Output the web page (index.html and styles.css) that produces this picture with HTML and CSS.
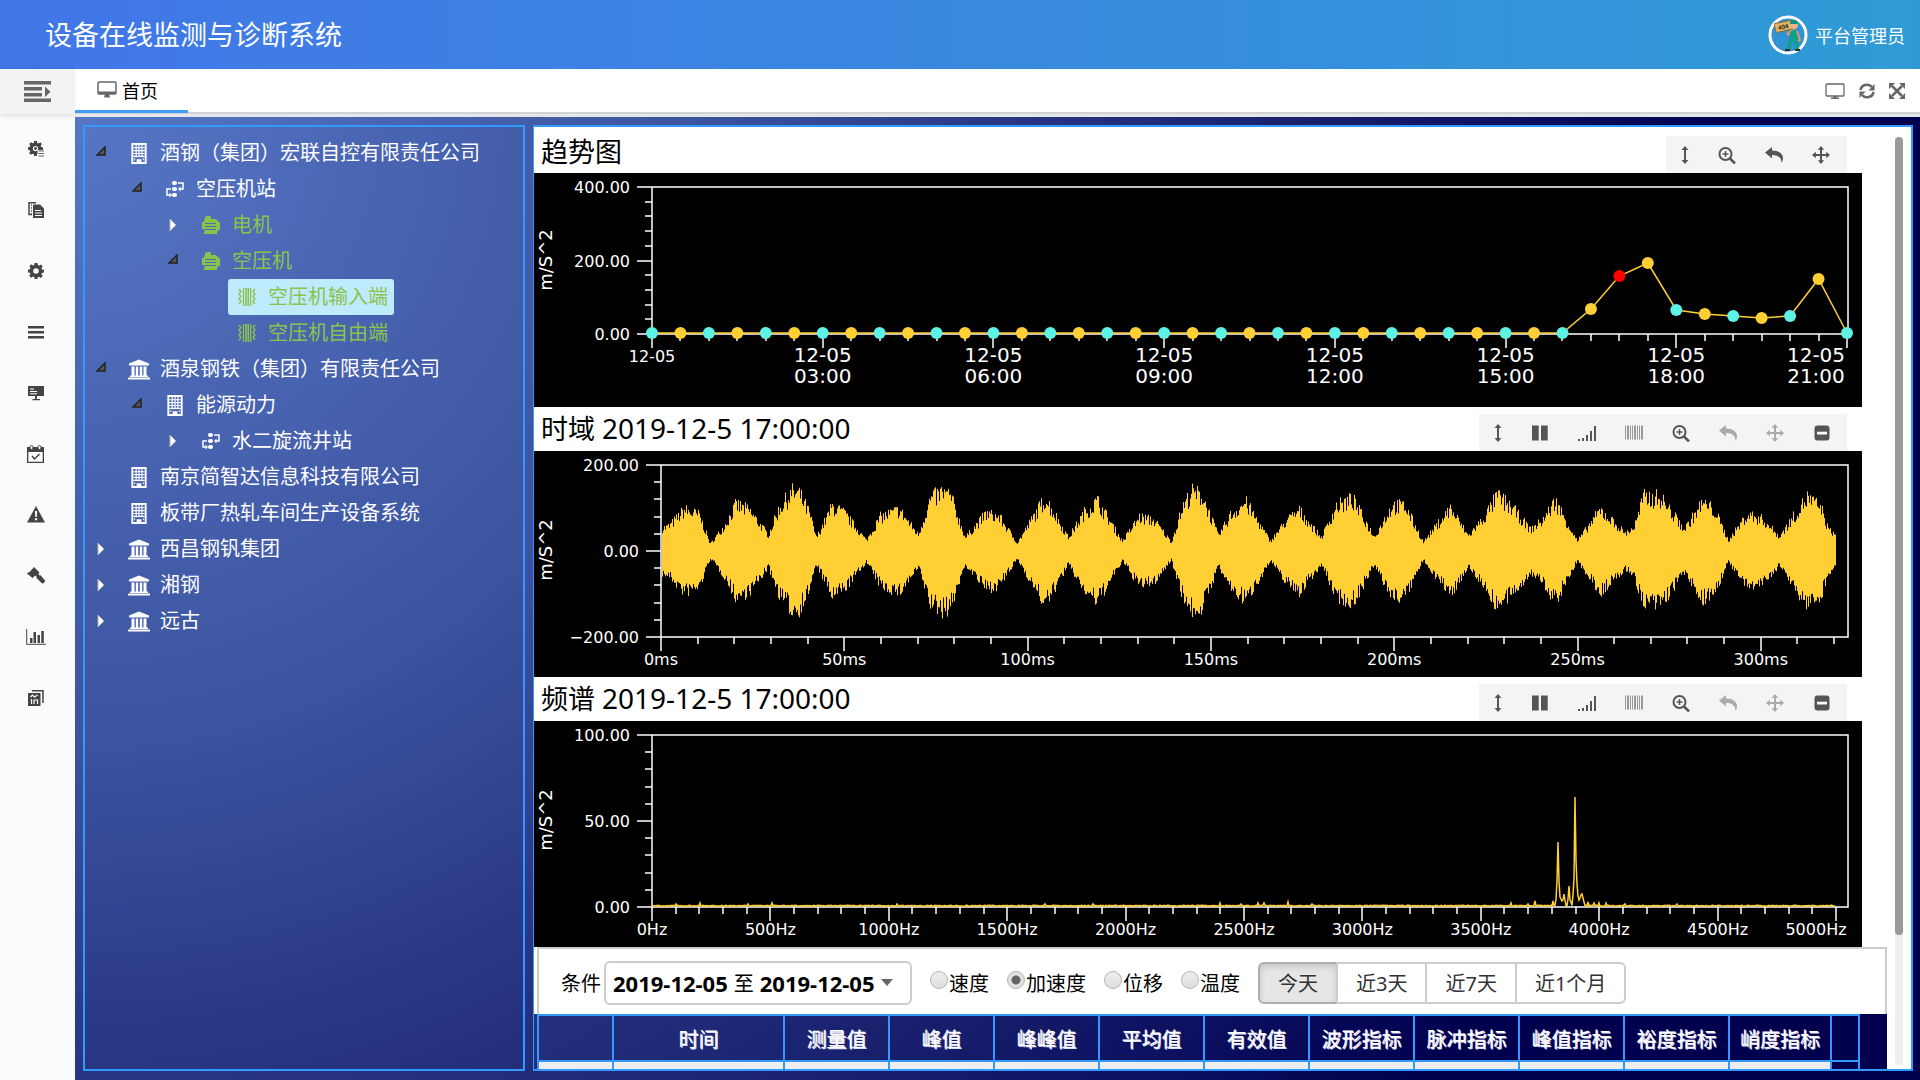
FILE: index.html
```html
<!DOCTYPE html>
<html lang="zh-CN">
<head>
<meta charset="utf-8">
<title>设备在线监测与诊断系统</title>
<link rel="stylesheet" href="styles.css">
</head>
<body>
<svg class="sprite" aria-hidden="true">
  <symbol id="i-building" viewBox="0 0 18 22"><path fill="#fff" fill-rule="evenodd" d="M1 0h16v22H1zM3 2v18h3.500v-3h5v3H15V2z"/><path stroke="#fff" stroke-width="1.200" fill="none" d="M3 5h12M3 8h12M3 11h12M3 14h12M6 2v13M9 2v13M12 2v13"/><path fill="#fff" d="M4 16h1v2H4zM13 16h1v2h-1z"/></symbol>
  <symbol id="i-bank" viewBox="0 0 22 20"><path fill="#fff" d="M11 0l10 4v2H1V4zM0 18h22v2H0zM2 16h18v1.500H2zM3.500 7h3v9h-3zM7.800 7h2.400v9H7.800zM11.800 7h2.400v9h-2.400zM15.500 7h3v9h-3z"/></symbol>
  <symbol id="i-flow" viewBox="0 0 18 18"><path fill="none" stroke="#fff" stroke-width="1.500" d="M5 9H1v6h4M12 3h5v6h-4"/><g fill="#fff"><rect x="6" y="1" width="5" height="4" rx="2"/><rect x="6" y="7" width="5" height="4" rx="2"/><rect x="6" y="13" width="5" height="4" rx="2"/><path d="M3.500 12.500l2.500 2.500-2.500 2.500zM14.500 6.500L12 9l2.500 2.500z"/></g></symbol>
  <symbol id="i-motor" viewBox="0 0 18 18"><path fill="#8bc34a" d="M3 1l2-1h3l1 1v2h5l2 2v1h2v8h-2v1l-1 1v2H2v-2l1-1-1-2H0V6h2V4l1-1z"/><path stroke="#4f6cba" fill="none" d="M3 7.500h11M3 10.500h11M3 13.500h11"/></symbol>
  <symbol id="i-vibe" viewBox="0 0 18 18"><g fill="none" stroke="#8bc34a" stroke-width="1.300"><path d="M1 1l2 2.500L1 6l2 2.500L1 11l2 2.500L1 16M17 1l-2 2.500L17 6l-2 2.500 2 2.500-2 2.500 2 2.500"/><path d="M5.500 0v18M12.700 0v18"/><path stroke-width="1.600" d="M8 0v18M10.300 0v18"/></g></symbol>
  <symbol id="i-open" viewBox="0 0 10 10"><path d="M9 1v8H1z" fill="#555" stroke="#222" stroke-width="1.500"/></symbol>
  <symbol id="i-closed" viewBox="0 0 8 14"><path d="M1 1l6 6-6 6z" fill="#fff" stroke="#b0b0b0"/></symbol>
  <symbol id="i-fold" viewBox="0 0 27 21"><path fill="#666" d="M0 0h27v3.500H0zM0 6h18v3.500H0zM0 12h18v3.500H0zM0 17.500h27V21H0zM21 5.500l5.500 5.200L21 16z"/></symbol>
  <symbol id="i-screen" viewBox="0 0 20 17"><rect x="1" y="1" width="18" height="12" rx="1" fill="#fff" stroke="#666" stroke-width="1.500"/><path fill="#666" d="M1 10.500h18V13H1zM8 13h4l1 3.500H7z"/></symbol>
  <symbol id="i-screen-thin" viewBox="0 0 20 16"><rect x="1" y="1" width="18" height="12" rx="1" fill="none" stroke="#666" stroke-width="1.300"/><path fill="#666" d="M8.500 13h3v1.500h2.500V16H6v-1.500h2.500z"/></symbol>
  <symbol id="i-refresh" viewBox="0 0 16 16"><path fill="none" stroke="#666" stroke-width="2.600" d="M1.500 7A6.500 6 0 0 1 13 4M14.500 9A6.500 6 0 0 1 3 12"/><path fill="#666" d="M15.500 1v6.500H9.500zM.5 15V8.500h6z"/></symbol>
  <symbol id="i-expand" viewBox="0 0 16 16"><path stroke="#666" stroke-width="2.500" d="M3 3l10 10M13 3L3 13"/><path fill="#666" d="M0 0h6L0 6zM16 0v6l-6-6zM0 16v-6l6 6zM16 16h-6l6-6z"/></symbol>
  <symbol id="i-gear" viewBox="0 0 16 16"><path fill="#444" fill-rule="evenodd" d="M6.500 0h3l.4 2.100 1.300.6L13 1.400 14.800 3.300 13.500 5.100l.5 1.300 2 .3v2.800l-2 .4-.6 1.200 1.300 1.800-2 2-1.700-1.200-1.300.5L9.300 16H6.600l-.4-2-1.200-.5-1.800 1.200-2-2 1.200-1.700L2 9.800 0 9.400V6.600l2-.4.500-1.200-1.200-1.800 2-1.900L5 2.500l1.200-.5zM8 5.200a2.800 2.800 0 1 0 0 5.600 2.800 2.800 0 0 0 0-5.600z"/></symbol>
  <symbol id="i-gear-list" viewBox="0 0 16 16"><use href="#i-gear" width="15" height="15"/><circle cx="7.500" cy="7.500" r="1.400" fill="#444"/><path fill="#f9fbfd" d="M9.500 9H16v7H9.500z"/><path stroke="#666" d="M10.500 10H16M10.500 12.500H16M10.500 15H16"/></symbol>
  <symbol id="i-docs" viewBox="0 0 16 16"><path fill="none" stroke="#444" stroke-width="1.500" d="M4 12.500H1V.8h7"/><path stroke="#777" d="M3.500 2v10" stroke-dasharray="2 1"/><path fill="#444" d="M5 2.500h7l4 4V16H5z"/><path stroke="#f9fbfd" d="M7 8.500h6M7 11h7M7 13.500h7"/></symbol>
  <symbol id="i-menu" viewBox="0 0 16 16"><path fill="#444" d="M0 2h16v2.600H0zM0 7h16v2.600H0zM0 12h16v2.600H0z"/></symbol>
  <symbol id="i-board" viewBox="0 0 16 16"><path fill="#444" d="M0 1h16v10H9v3h3v1.200H4.500V14H7v-3H0z"/><path stroke="#fff" d="M2 4h4M2 6.500h7M2 8.800h7"/></symbol>
  <symbol id="i-calendar" viewBox="0 0 17 18"><path fill="#444" fill-rule="evenodd" d="M0 2h17v16H0zM1.300 7v9.700h14.400V7z"/><g fill="#f9fbfd" stroke="#444"><rect x="3" y=".5" width="3" height="4" rx="1.500"/><rect x="11" y=".5" width="3" height="4" rx="1.500"/></g><path fill="none" stroke="#444" stroke-width="1.500" d="M5 11l2.500 3 5-5"/></symbol>
  <symbol id="i-warn" viewBox="0 0 18 17"><path fill="#444" d="M9 0l9 16.500H0z"/><path fill="#fff" d="M8 5h2.200l-.4 6H8.300zM8 12.300h2.200v2H8z"/></symbol>
  <symbol id="i-gavel" viewBox="0 0 18 18"><path fill="#444" d="M7 0l5.500 5.500-1 1.200.9 1.700 1.200-.2L18 13.500c.4 1.500-2 3.500-3.200 2.700L9.500 11l.1-1.300-1.300-1.200L5.500 11 0 6.500l1-1.300 1 .3L6 1.200z"/></symbol>
  <symbol id="i-chart" viewBox="0 0 20 16"><path fill="none" stroke="#444" d="M.7 0v15.300H20"/><path fill="#444" d="M4 9h2.500v5H4zM7.500 3h2.500v11H7.500zM11.500 6h2.500v8h-2.500zM15.300 2h2.500v12h-2.500z"/></symbol>
  <symbol id="i-report" viewBox="0 0 16 16"><path fill="none" stroke="#444" stroke-width="1.500" d="M4 .8h11V13"/><path fill="#444" d="M0 3h12.500v13H0z"/><path fill="none" stroke="#fff" stroke-width="1.200" d="M2.500 7l2-2 2 2 3-2M3.500 9v5M6 14v-4h3.500v4"/></symbol>
  <symbol id="i-vert" viewBox="0 0 18 18"><path fill="currentColor" d="M9 0l3.500 4H10v10h2.500L9 18l-3.500-4H8V4H5.500z"/></symbol>
  <symbol id="i-pause" viewBox="0 0 18 18"><path fill="currentColor" d="M1 1.500h6.700v15H1zM10 1.500h6.700v15H10z"/></symbol>
  <symbol id="i-signal" viewBox="0 0 18 18"><path fill="currentColor" d="M0 15h2v2H0zM4 14h2v3H4zM8 11h2v6H8zM12 7h2v10h-2zM16 2h2.500v15H16z"/></symbol>
  <symbol id="i-barcode" viewBox="0 0 18 18"><path fill="#999" d="M0 1.500h1v14H0zM2 1.500h2v14H2zM5 1.500h1v14H5zM7 1.500h1v14H7zM9 1.500h2v14H9zM12 1.500h1v14h-1zM14 1.500h1v14h-1zM16 1.500h2v14h-2z"/></symbol>
  <symbol id="i-zoom" viewBox="0 0 18 18"><circle cx="7.500" cy="8" r="6" fill="none" stroke="currentColor" stroke-width="2"/><path stroke="currentColor" stroke-width="1.500" d="M4.500 8h6M7.500 5v6"/><path stroke="currentColor" stroke-width="2.500" d="M12 12.500l5 5"/></symbol>
  <symbol id="i-undo" viewBox="0 0 18 18"><path fill="currentColor" d="M0 6.500L7 1v3.500c7 0 11 3.500 11 8 0 1.500-.5 3-1.500 4.500C16.500 11.500 13 9 7 9v3.500z"/></symbol>
  <symbol id="i-move" viewBox="0 0 18 18"><path fill="currentColor" d="M9 0l3.200 3.800H10V8h4.200V5.800L18 9l-3.800 3.200V10H10v4.200h2.200L9 18l-3.200-3.800H8V10H3.800v2.200L0 9l3.800-3.200V8H8V3.800H5.800z"/></symbol>
  <symbol id="i-minus" viewBox="0 0 18 18"><rect x="1.500" y="1.500" width="15" height="15" rx="3" fill="currentColor"/><path fill="#fff" d="M4 7.700h10v2.800H4z"/></symbol>
</svg>

<header class="header">
  <h1 class="brand">设备在线监测与诊断系统</h1>
  <a class="user" href="#">
    <svg class="avatar" viewBox="0 0 40 40" aria-hidden="true">
      <circle cx="20" cy="20" r="18" fill="#2f93d6" stroke="#fff" stroke-width="3"/>
      <path d="M19 20l8-8" stroke="#d79a6a" stroke-width="3"/>
      <rect x="7" y="7" width="17" height="9" rx="1" fill="#dcb56a" stroke="#8a6730" transform="rotate(-12 15 12)"/>
      <text class="avatar-sign" x="10" y="14" transform="rotate(-12 15 12)">404</text>
      <circle cx="26" cy="10" r="4" fill="#e8b48a"/><path d="M22 9a4 4 0 0 1 8 0z" fill="#12917e"/>
      <path d="M22 17l3-2h4l2 5-1 4 1 10h-3l-3-8-3 8h-4l4-11z" fill="#12a08e"/>
      <path d="M29 16l3 9-2 1" stroke="#d79a6a" stroke-width="2" fill="none"/>
      <path d="M17 34h5v2h-5zM27 34h5v2h-5z" fill="#3a2a20"/>
    </svg>
    <span>平台管理员</span>
  </a>
</header>

<div class="body">
  <aside class="sidebar">
    <button class="fold" aria-label="展开菜单"><svg width="27" height="21"><use href="#i-fold"/></svg></button>
    <nav class="menu">
      <a href="#"><svg width="16" height="16"><use href="#i-gear-list"/></svg></a>
      <a href="#"><svg width="16" height="16"><use href="#i-docs"/></svg></a>
      <a href="#"><svg width="16" height="16"><use href="#i-gear"/></svg></a>
      <a href="#"><svg width="16" height="16"><use href="#i-menu"/></svg></a>
      <a href="#"><svg width="16" height="16"><use href="#i-board"/></svg></a>
      <a href="#"><svg width="17" height="18"><use href="#i-calendar"/></svg></a>
      <a href="#"><svg width="18" height="17"><use href="#i-warn"/></svg></a>
      <a href="#"><svg width="18" height="18"><use href="#i-gavel"/></svg></a>
      <a href="#"><svg width="20" height="16"><use href="#i-chart"/></svg></a>
      <a href="#"><svg width="16" height="16"><use href="#i-report"/></svg></a>
    </nav>
  </aside>

  <div class="workspace">
    <div class="tabs">
      <a class="tab" href="#"><svg width="20" height="17"><use href="#i-screen"/></svg><span>首页</span></a>
      <div class="tab-tools">
        <button aria-label="大屏"><svg width="20" height="16"><use href="#i-screen-thin"/></svg></button>
        <button aria-label="刷新"><svg width="16" height="16"><use href="#i-refresh"/></svg></button>
        <button aria-label="全屏"><svg width="16" height="16"><use href="#i-expand"/></svg></button>
      </div>
    </div>

    <main class="main">
      <ul class="tree">
        <li class="node"><svg class="arrow open"><use href="#i-open"/></svg><a href="#"><svg class="icon"><use href="#i-building"/></svg>酒钢（集团）宏联自控有限责任公司</a></li>
        <li class="node l2"><svg class="arrow open"><use href="#i-open"/></svg><a href="#"><svg class="icon small"><use href="#i-flow"/></svg>空压机站</a></li>
        <li class="node l3 green"><svg class="arrow"><use href="#i-closed"/></svg><a href="#"><svg class="icon small"><use href="#i-motor"/></svg>电机</a></li>
        <li class="node l3 green"><svg class="arrow open"><use href="#i-open"/></svg><a href="#"><svg class="icon small"><use href="#i-motor"/></svg>空压机</a></li>
        <li class="node l4 green"><span class="arrow"></span><a class="selected" href="#"><svg class="icon small"><use href="#i-vibe"/></svg>空压机输入端</a></li>
        <li class="node l4 green"><span class="arrow"></span><a href="#"><svg class="icon small"><use href="#i-vibe"/></svg>空压机自由端</a></li>
        <li class="node"><svg class="arrow open"><use href="#i-open"/></svg><a href="#"><svg class="icon"><use href="#i-bank"/></svg>酒泉钢铁（集团）有限责任公司</a></li>
        <li class="node l2"><svg class="arrow open"><use href="#i-open"/></svg><a href="#"><svg class="icon"><use href="#i-building"/></svg>能源动力</a></li>
        <li class="node l3"><svg class="arrow"><use href="#i-closed"/></svg><a href="#"><svg class="icon small"><use href="#i-flow"/></svg>水二旋流井站</a></li>
        <li class="node"><span class="arrow"></span><a href="#"><svg class="icon"><use href="#i-building"/></svg>南京简智达信息科技有限公司</a></li>
        <li class="node"><span class="arrow"></span><a href="#"><svg class="icon"><use href="#i-building"/></svg>板带厂热轧车间生产设备系统</a></li>
        <li class="node"><svg class="arrow"><use href="#i-closed"/></svg><a href="#"><svg class="icon"><use href="#i-bank"/></svg>西昌钢钒集团</a></li>
        <li class="node"><svg class="arrow"><use href="#i-closed"/></svg><a href="#"><svg class="icon"><use href="#i-bank"/></svg>湘钢</a></li>
        <li class="node"><svg class="arrow"><use href="#i-closed"/></svg><a href="#"><svg class="icon"><use href="#i-bank"/></svg>远古</a></li>
      </ul>

      <section class="panel">
        <div class="content">
          <div class="charts">
            <div class="chart-head first">
              <h2>趋势图</h2>
              <div class="toolbar short">
                <button aria-label="纵向缩放"><svg><use href="#i-vert"/></svg></button>
                <button aria-label="放大"><svg><use href="#i-zoom"/></svg></button>
                <button aria-label="还原"><svg><use href="#i-undo"/></svg></button>
                <button aria-label="移动"><svg><use href="#i-move"/></svg></button>
              </div>
            </div>
            <svg class="chart" id="trend" viewBox="0 0 1328 234"></svg>
            <div class="chart-head">
              <h2>时域 <time>2019-12-5 17:00:00</time></h2>
              <div class="toolbar">
                <button aria-label="纵向缩放"><svg><use href="#i-vert"/></svg></button>
                <button aria-label="暂停"><svg><use href="#i-pause"/></svg></button>
                <button aria-label="幅值"><svg><use href="#i-signal"/></svg></button>
                <button aria-label="谱线"><svg><use href="#i-barcode"/></svg></button>
                <button aria-label="放大"><svg><use href="#i-zoom"/></svg></button>
                <button aria-label="还原" disabled><svg><use href="#i-undo"/></svg></button>
                <button aria-label="移动" disabled><svg><use href="#i-move"/></svg></button>
                <button aria-label="收起"><svg><use href="#i-minus"/></svg></button>
              </div>
            </div>
            <svg class="chart" id="wave" viewBox="0 0 1328 226"></svg>
            <div class="chart-head">
              <h2>频谱 <time>2019-12-5 17:00:00</time></h2>
              <div class="toolbar">
                <button aria-label="纵向缩放"><svg><use href="#i-vert"/></svg></button>
                <button aria-label="暂停"><svg><use href="#i-pause"/></svg></button>
                <button aria-label="幅值"><svg><use href="#i-signal"/></svg></button>
                <button aria-label="谱线"><svg><use href="#i-barcode"/></svg></button>
                <button aria-label="放大"><svg><use href="#i-zoom"/></svg></button>
                <button aria-label="还原" disabled><svg><use href="#i-undo"/></svg></button>
                <button aria-label="移动" disabled><svg><use href="#i-move"/></svg></button>
                <button aria-label="收起"><svg><use href="#i-minus"/></svg></button>
              </div>
            </div>
            <svg class="chart" id="spectrum" viewBox="0 0 1328 226"></svg>
          </div>

          <div class="filter-wrap">
            <form class="filter">
              <span>条件</span>
              <button type="button" class="range"><b>2019-12-05</b><span>至</span><b>2019-12-05</b><i class="caret"></i></button>
              <div class="radios">
                <label><input type="radio" name="kind">速度</label>
                <label><input type="radio" name="kind" checked>加速度</label>
                <label><input type="radio" name="kind">位移</label>
                <label><input type="radio" name="kind">温度</label>
              </div>
              <div class="group">
                <button type="button" class="active">今天</button>
                <button type="button">近3天</button>
                <button type="button">近7天</button>
                <button type="button">近1个月</button>
              </div>
            </form>
          </div>

          <table class="data">
            <colgroup><col class="c-no"><col class="c-time"><col span="9" class="c-val"><col class="c-last"><col></colgroup>
            <thead><tr><th></th><th>时间</th><th>测量值</th><th>峰值</th><th>峰峰值</th><th>平均值</th><th>有效值</th><th>波形指标</th><th>脉冲指标</th><th>峰值指标</th><th>裕度指标</th><th>峭度指标</th><th></th></tr></thead>
            <tbody><tr><td></td><td></td><td></td><td></td><td></td><td></td><td></td><td></td><td></td><td></td><td></td><td></td><td></td></tr></tbody>
          </table>
        </div>
        <div class="scroll"><div class="track"><div class="thumb"></div></div></div>
      </section>
    </main>
  </div>
</div>
<script src="charts.js"></script>
</body>
</html>
```

FILE: styles.css
```css
* { box-sizing: border-box; }

body {
  margin: 0;
  height: 100vh;
  display: flex;
  flex-direction: column;
  overflow: hidden;
  font-family: "Noto Sans", "Noto Sans CJK SC", sans-serif;
  font-size: 20px;
  color: #000;
}

button {
  font: inherit;
  margin: 0;
  padding: 0;
  border: 0;
  background: none;
}

a { color: inherit; text-decoration: none; }
svg { flex: none; display: block; }
.sprite { position: absolute; width: 0; height: 0; }

.header {
  flex: none;
  height: 69px;
  padding: 0 15px 0 45px;
  display: flex;
  align-items: center;
  justify-content: space-between;
  background: linear-gradient(to right, #4276e8, #2f9bd6);
  color: #fff;
}
.brand { margin: 0; font-size: 27px; font-weight: 400; line-height: 40px; }
.user { display: flex; align-items: center; gap: 7px; font-size: 18px; }
.avatar { width: 40px; height: 40px; }
.avatar-sign { font-size: 6px; font-weight: 700; fill: #3a2a10; }

.body { flex: 1; min-height: 0; display: flex; }

.sidebar { flex: none; width: 75px; background: #f9fbfd; }
.fold {
  width: 100%;
  height: 45px;
  display: flex;
  align-items: center;
  justify-content: center;
  background: #f2f3f5;
  box-shadow: 0 1px 6px rgba(0, 0, 0, .16);
}
.menu { padding-top: 4px; }
.menu a { height: 61px; display: flex; align-items: center; justify-content: center; padding-right: 4px; }

.workspace { flex: 1; min-width: 0; display: flex; flex-direction: column; }
.tabs {
  flex: none;
  height: 48px;
  display: flex;
  justify-content: space-between;
  background: linear-gradient(#fff 43px, #d0d2d4 43px, #d0d2d4 45px, #e4e8ea 45px);
}
.tab {
  height: 44px;
  width: 113px;
  padding-left: 22px;
  display: flex;
  align-items: center;
  gap: 5px;
  border-bottom: 3px solid #409eff;
  font-size: 18px;
}
.tab-tools { height: 43px; display: flex; align-items: center; gap: 14px; padding-right: 15px; }

.main {
  flex: 1;
  min-height: 0;
  display: flex;
  gap: 8px;
  padding: 8px 7px 9px 8px;
  background: radial-gradient(circle at 0 0, #5677c5 0, #3c539f 30%, #25317e 48%, #00004f 80%);
}

.tree {
  flex: none;
  width: 442px;
  margin: 0;
  padding: 8px 0 0 11px;
  list-style: none;
  border: 2px solid #39f;
  color: #fff;
}
.node { display: flex; align-items: center; height: 36px; }
.node a { display: flex; align-items: center; height: 36px; gap: 10px; line-height: 36px; padding: 0 6px 0 8px; white-space: nowrap; border-radius: 3px; }
.l2 { padding-left: 36px; }
.l3 { padding-left: 72px; }
.l4 { padding-left: 108px; }
.green { color: #8bc34a; }
.arrow { flex: none; width: 10px; height: 14px; margin-right: 14px; }
.arrow.open { height: 10px; margin-bottom: 4px; }
.icon { width: 22px; height: 21px; }
.icon.small { height: 18px; }
.selected { background: #bfebff; }

.panel {
  flex: 1;
  min-width: 0;
  display: flex;
  border: 2px solid #39f;
  border-left-width: 1px;
}
.content { flex: 1; min-width: 0; overflow: hidden; }
.charts { background: #fff; padding-right: 25px; }
.chart { width: 100%; height: auto; background: #000; }
.chart-head { height: 44px; display: flex; justify-content: space-between; align-items: flex-end; padding: 0 15px 0 7px; }
.chart-head.first { height: 46px; }
.chart-head h2 { margin: 0; font-size: 27px; font-weight: 400; line-height: 44px; }
.chart-head.first h2 { line-height: 42px; }
.chart-head time { font-size: 28px; }
.toolbar { display: flex; align-items: center; gap: 29px; width: 368px; height: 37px; padding-left: 10px; background: #f4f4f4; color: #555; }
.toolbar.short { width: 181px; }
.toolbar button { color: #555; }
.toolbar button:first-child { margin-right: -5px; }
.toolbar button:disabled { color: #aaa; }
.toolbar svg { width: 18px; height: 18px; }

.axis { stroke: #fff; stroke-width: 1.5; fill: none; }
.tick { font-family: "DejaVu Sans", "Liberation Sans", sans-serif; font-size: 16px; fill: #fff; }
.tick.large { font-size: 20px; }
.tick.unit { font-size: 18px; }
.trace { stroke: #ffcf33; fill: none; stroke-width: 1; }
.trace.line { stroke-width: 1.5; }

.filter-wrap { padding-left: 3px; background: #fff; }
.filter {
  height: 67px;
  display: flex;
  align-items: center;
  padding: 2px 0 0 22px;
  border: 2px solid #ccc;
  border-bottom: 0;
}
.range {
  width: 308px;
  height: 44px;
  margin-left: 3px;
  padding: 0 8px 0 7px;
  display: flex;
  align-items: center;
  gap: 6px;
  border: 2px solid #ccc;
  border-radius: 6px;
  white-space: nowrap;
}
.range b { font-size: 22px; }
.caret { border: 6px solid transparent; border-top: 7px solid #666; border-bottom: 0; }
.radios { display: flex; gap: 18px; margin: 0 18px; }
.radios label { display: flex; align-items: center; gap: 1px; white-space: nowrap; }
.radios input {
  appearance: none;
  width: 18px;
  height: 18px;
  margin: 0 0 6px;
  border: 1px solid #b4b4b4;
  border-radius: 50%;
  background: linear-gradient(#eee, #ddd);
}
.radios input:checked { background: radial-gradient(circle, #666 4px, #e2e2e2 5px); }
.group { display: flex; }
.group button {
  height: 42px;
  padding: 0 18px;
  border: 2px solid #ccc;
  margin-left: -2px;
  color: #333;
  white-space: nowrap;
}
.group button:first-child { margin-left: 0; border-radius: 6px 0 0 6px; }
.group button:last-child { border-radius: 0 6px 6px 0; }
.group .active { background: #e6e6e6; border-color: #adadad; box-shadow: inset 0 3px 6px rgba(0, 0, 0, .14); }

.data {
  width: calc(100% - 30px);
  margin-left: 3px;
  border-collapse: collapse;
  table-layout: fixed;
  border: 2px solid #39f;
  color: #fff;
}
.c-no { width: 75px; }
.c-time { width: 171px; }
.c-val { width: 105px; }
.c-last { width: 102px; }
.data th { height: 46px; padding: 0; border: 2px solid #39f; font-weight: 400; text-shadow: 1px 1px #dde; white-space: nowrap; }
.data td { height: 36px; border: 2px solid #39f; background: #eee; }
.data td:last-child { background: none; }

.scroll { flex: none; width: 24px; padding: 10px 8px 4px; background: #fff; }
.track { height: 100%; border-radius: 4px; background: #eee; }
.thumb { height: 86%; border-radius: 4px; background: #999; }
```

FILE: charts.js
```js
const NS = "http://www.w3.org/2000/svg";

function add(svg, name, attrs, text) {
  const el = document.createElementNS(NS, name);
  for (const key in attrs) el.setAttribute(key, attrs[key]);
  if (text !== undefined) el.textContent = text;
  svg.appendChild(el);
}

// Repeatable noise, so that the traces look the same on every load
let seed = 7;
function noise() {
  seed = (seed * 16807) % 2147483647;
  return seed / 2147483647;
}

function frame(svg, left, bottom, yLabels) {
  const top = 14, right = 1314;
  let d = `M${left} ${top}H${right}V${bottom}H${left}Z`;
  for (let i = 0; i <= 10; i++) {
    const y = Math.round(top + (bottom - top) * i / 10);
    d += `M${left} ${y}h${i % 5 ? -7 : -15}`;
  }
  add(svg, "path", { class: "axis", d });
  yLabels.forEach((label, i) => {
    const y = top + (bottom - top) * i / 2 + 6;
    add(svg, "text", { class: "tick", x: left - 22, y, "text-anchor": "end" }, label);
  });
  const mid = Math.round((top + bottom) / 2) - 1;
  add(svg, "text", { class: "tick unit", x: 18, y: mid, "text-anchor": "middle", transform: `rotate(-90 18 ${mid})` }, "m/S^2");
}

function xTicks(svg, left, bottom, step, count, major) {
  let d = "";
  for (let i = 0; i <= count; i++) {
    d += `M${Math.round(left + step * i)} ${bottom}v${i % major ? 7 : 14}`;
  }
  add(svg, "path", { class: "axis", d });
}

function drawTrend() {
  const svg = document.getElementById("trend");
  const left = 118, bottom = 161, step = 1195 / 42;
  frame(svg, left, bottom, ["400.00", "200.00", "0.00"]);
  xTicks(svg, left, bottom, step, 42, 6);
  add(svg, "text", { class: "tick", x: left, y: 189, "text-anchor": "middle" }, "12-05");
  ["03:00", "06:00", "09:00", "12:00", "15:00", "18:00", "21:00"].forEach((hour, i) => {
    const x = Math.min(left + step * 6 * (i + 1), 1282);
    add(svg, "text", { class: "tick large", x, y: 189, "text-anchor": "middle" }, "12-05");
    add(svg, "text", { class: "tick large", x, y: 210, "text-anchor": "middle" }, hour);
  });
  const ys = Array(33).fill(160).concat([136, 103, 90, 137, 141, 143, 145, 143, 106, 160]);
  const pts = ys.map((y, i) => [left + step * i, y]);
  add(svg, "path", { class: "trace line", d: "M" + pts.map(p => p.join(" ")).join("L") });
  pts.forEach(([cx, cy], i) => {
    const fill = i === 34 ? "#f00" : i % 2 ? "#ffcf33" : "#5df2e6";
    add(svg, "circle", { cx, cy, r: 6, fill });
  });
}

function drawWave() {
  const svg = document.getElementById("wave");
  const left = 127, bottom = 186, zero = 100;
  frame(svg, left, bottom, ["200.00", "0.00", "\u2212200.00"]);
  xTicks(svg, left, bottom, 36.66, 32, 5);
  for (let i = 0; i <= 6; i++) {
    add(svg, "text", { class: "tick", x: left + 183.3 * i, y: 214, "text-anchor": "middle" }, i * 50 + "ms");
  }
  // Envelope of the signal: x position, amplitude
  const env = [[127, 25], [135, 28], [150, 46], [165, 40], [176, 8], [190, 28], [202, 52], [215, 45], [234, 18], [245, 48],
    [258, 66], [265, 64], [275, 42], [282, 15], [298, 50], [310, 42], [332, 12], [346, 38], [365, 46], [384, 18],
    [396, 58], [408, 66], [416, 62], [431, 15], [452, 42], [465, 38], [483, 9], [500, 40], [511, 59], [534, 15],
    [550, 43], [563, 56], [588, 11], [605, 38], [620, 34], [637, 10], [648, 48], [657, 66], [668, 62], [684, 17],
    [696, 40], [711, 55], [736, 11], [752, 34], [765, 45], [787, 15], [802, 50], [818, 58], [840, 16], [858, 51],
    [871, 50], [889, 10], [916, 48], [934, 17], [950, 38], [963, 62], [978, 48], [996, 24], [1008, 34], [1021, 56],
    [1043, 11], [1066, 46], [1091, 20], [1100, 27], [1109, 60], [1126, 60], [1150, 24], [1168, 54], [1180, 46],
    [1194, 12], [1213, 41], [1229, 35], [1245, 16], [1273, 60], [1287, 48], [1294, 24], [1302, 18]];
  let d = "", k = 0;
  for (let x = left + 1; x <= 1301; x++) {
    while (env[k + 1][0] < x) k++;
    const [x0, a0] = env[k], [x1, a1] = env[k + 1];
    const t = (x - x0) / (x1 - x0);
    const amp = a0 + (a1 - a0) * t;
    const up = amp * (0.7 + 0.34 * noise()), down = amp * (0.7 + 0.34 * noise());
    d += `M${x + 0.5} ${(zero - up).toFixed(1)}V${(zero + down).toFixed(1)}`;
  }
  add(svg, "path", { class: "trace", d });
}

function drawSpectrum() {
  const svg = document.getElementById("spectrum");
  const left = 118, bottom = 186;
  frame(svg, left, bottom, ["100.00", "50.00", "0.00"]);
  xTicks(svg, left, bottom, 23.68, 50, 5);
  for (let i = 0; i <= 10; i++) {
    add(svg, "text", { class: "tick", x: Math.min(left + 118.4 * i, 1282), y: 214, "text-anchor": "middle" }, i * 500 + "Hz");
  }
  const peaks = { 142: 183, 166: 182, 214: 183, 238: 182, 363: 183, 511: 183, 559: 183, 686: 182, 707: 183, 724: 182, 730: 182,
    754: 181, 778: 183, 977: 182, 994: 183, 1001: 180, 1019: 180, 1022: 178, 1023: 160, 1024: 121, 1025: 160, 1026: 176,
    1027: 178, 1028: 180, 1029: 179, 1030: 173, 1031: 179, 1034: 178, 1035: 165, 1036: 179, 1037: 181, 1039: 174, 1040: 158,
    1041: 76, 1042: 140, 1043: 163, 1044: 175, 1045: 179, 1046: 177, 1047: 174, 1048: 173, 1049: 177, 1050: 181,
    1054: 181, 1060: 182, 1065: 182, 1072: 182, 1091: 183, 1143: 183 };
  let d = `M${left} 185`;
  for (let x = left + 1; x <= 1301; x++) {
    d += `L${x} ${peaks[x] || (184.2 + noise()).toFixed(1)}`;
  }
  add(svg, "path", { class: "trace line", d });
}

drawTrend();
drawWave();
drawSpectrum();
```
